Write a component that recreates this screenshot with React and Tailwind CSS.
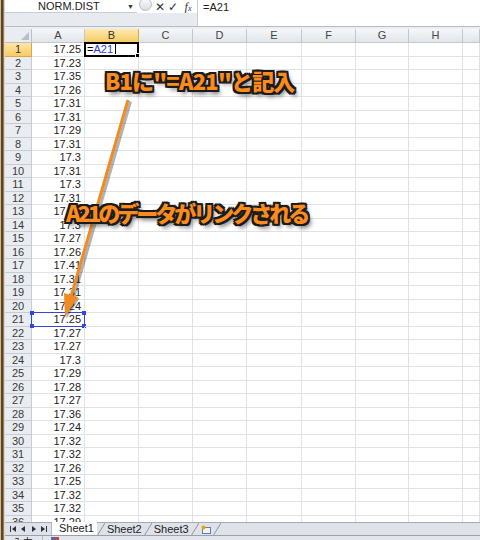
import React from "react";

// Column layout of the sheet
const cols = [
  { name: "A", cls: "w-[53px]" },
  { name: "B", cls: "w-[54px]" },
  { name: "C", cls: "w-[54px]" },
  { name: "D", cls: "w-[54px]" },
  { name: "E", cls: "w-[55px]" },
  { name: "F", cls: "w-[54px]" },
  { name: "G", cls: "w-[53px]" },
  { name: "H", cls: "w-[54px]" },
  { name: "", cls: "flex-1" },
];

const values = [
  "17.25", "17.23", "17.35", "17.26", "17.31", "17.31", "17.29", "17.31", "17.3",
  "17.31", "17.3", "17.31", "17.31", "17.3", "17.27", "17.26", "17.41", "17.31",
  "17.31", "17.24", "17.25", "17.27", "17.27", "17.3", "17.29", "17.28", "17.27",
  "17.36", "17.24", "17.32", "17.32", "17.26", "17.25", "17.32", "17.32", "17.29",
];

const outline =
  "[text-shadow:-2px_-2px_0_#1b1b1b,2px_-2px_0_#1b1b1b,-2px_2px_0_#1b1b1b,2px_2px_0_#1b1b1b,0_-2px_0_#1b1b1b,0_2px_0_#1b1b1b,-2px_0_0_#1b1b1b,2px_0_0_#1b1b1b,3px_4px_4px_rgba(0,0,0,0.55)]";

const Slash = () => (
  <svg width="8" height="13" className="shrink-0">
    <line x1="0" y1="13" x2="8" y2="0" stroke="#8d96a2" strokeWidth="1" />
  </svg>
);

const Row = ({ n, value }) => {
  const first = n === 1;
  return (
    <div className="flex h-[13.5px]">
      <div
        className={
          first
            ? "flex w-[27px] shrink-0 items-center justify-center border-r border-b border-[#d9a84a] bg-[linear-gradient(#fde7a6,#f6cb63)] text-[#333]"
            : "flex w-[27px] shrink-0 items-center justify-center border-r border-b border-[#c6ccd3] bg-[#e9ecf0] text-[#3a3a3a]"
        }
      >
        {n}
      </div>
      {cols.map((c, i) => (
        <div
          key={i}
          className={c.cls + " relative shrink-0 border-r border-b border-[#dfe2e6]"}
        >
          {i === 0 ? (
            <div className="flex h-full items-center justify-end pr-[3px] text-[#222]">
              {value}
            </div>
          ) : null}
          {i === 0 && n === 21 ? (
            <div className="absolute -top-px -left-px -right-px -bottom-px border border-[#3046e0]">
              <div className="absolute -top-[2px] -left-[2px] h-[4px] w-[4px] bg-[#3046e0]" />
              <div className="absolute -top-[2px] -right-[2px] h-[4px] w-[4px] bg-[#3046e0]" />
              <div className="absolute -bottom-[2px] -left-[2px] h-[4px] w-[4px] bg-[#3046e0]" />
              <div className="absolute -bottom-[2px] -right-[2px] h-[4px] w-[4px] bg-[#3046e0]" />
            </div>
          ) : null}
          {i === 1 && first ? (
            <div className="absolute -top-px -left-px -right-px -bottom-px flex items-center border-2 border-black bg-white pl-[1px]">
              <span className="text-black">=</span>
              <span className="text-[#2a3ae6]">A21</span>
              <span className="ml-[2px] h-[10px] w-px bg-black" />
              <div className="absolute -right-[3px] -bottom-[3px] h-[5px] w-[5px] border border-white bg-black" />
            </div>
          ) : null}
        </div>
      ))}
    </div>
  );
};

const App = () => {
  return (
    <div className="relative flex h-[540px] w-[480px] overflow-hidden bg-white font-['Liberation_Sans',sans-serif] text-[11px] text-[#222]">
      {/* Window frame */}
      <div className="flex h-full w-[5px] shrink-0">
        <div className="w-px bg-[#cbbb9e]" />
        <div className="w-[2px] bg-[#5e4222]" />
        <div className="w-px bg-[#9c7c54]" />
        <div className="w-px bg-[#d9d4cc]" />
      </div>

      <div className="flex min-w-0 flex-1 flex-col">
        {/* Formula bar */}
        <div className="flex h-[13px] shrink-0 items-center">
          <div className="flex h-full w-[132px] items-center border-b border-[#c8cdd4]">
            <span className="flex-1 pl-[33px] leading-none">NORM.DIST</span>
            <span className="w-[10px] text-[7px] leading-none text-[#333]">▼</span>
          </div>
          <div className="flex h-full w-[16px] items-start justify-center overflow-hidden">
            <div className="-mt-[2px] h-[13px] w-[13px] rounded-full border border-[#b6bcc5] bg-[linear-gradient(#fafbfc,#d9dde3)]" />
          </div>
          <span className="w-[13px] text-center text-[12px] leading-none text-[#333]">✕</span>
          <span className="w-[13px] text-center text-[12px] leading-none text-[#333]">✓</span>
          <span className="w-[18px] text-center font-['Liberation_Serif',serif] text-[12px] italic leading-none text-[#333]">
            f<span className="text-[8px]">x</span>
          </span>
          <div className="flex h-[26px] flex-1 self-start border-l border-[#c8cdd4] pt-[1px] pl-[5px]">
            <span className="text-[11px] leading-[12px]">=A21</span>
          </div>
        </div>
        <div className="flex h-[13px] shrink-0">
          <div className="w-[192px] bg-[#e7eaee]" />
        </div>
        <div className="h-[3px] shrink-0 border-t border-[#b5bcc6] bg-[#eceef1]" />

        {/* Sheet grid */}
        <div className="h-[493px] shrink-0 overflow-hidden">
          <div className="flex h-[14px]">
            <div className="relative w-[27px] shrink-0 border-r border-b border-[#b9c0c9] bg-[#e9ecf0]">
              <svg width="8" height="8" className="absolute right-[2px] bottom-[2px]">
                <polygon points="8,0 8,8 0,8" fill="#b7bec7" />
              </svg>
            </div>
            {cols.map((c, i) => (
              <div
                key={i}
                className={
                  c.name === "B"
                    ? c.cls + " flex shrink-0 items-center justify-center border-r border-b border-[#d9a84a] bg-[linear-gradient(#fde9ad,#f6cc66)] text-[#333]"
                    : c.cls + " flex shrink-0 items-center justify-center border-r border-b border-[#c2c8d0] bg-[linear-gradient(#f6f7f9,#e1e5ea)] text-[#444]"
                }
              >
                {c.name}
              </div>
            ))}
          </div>
          {values.map((v, i) => (
            <Row key={i} n={i + 1} value={v} />
          ))}
        </div>

        {/* Sheet tabs */}
        <div className="flex h-[13px] shrink-0 border-t border-[#a3abb6] bg-[#dfe3e9]">
          <div className="flex w-[47px] shrink-0 items-center justify-around border-r border-[#b3bac4] px-[2px]">
            <svg width="6" height="6">
              <rect x="0" y="0" width="1" height="6" fill="#2b3440" />
              <polygon points="6,0 6,6 2,3" fill="#2b3440" />
            </svg>
            <svg width="5" height="6">
              <polygon points="4,0 4,6 0,3" fill="#2b3440" />
            </svg>
            <svg width="5" height="6">
              <polygon points="1,0 1,6 5,3" fill="#2b3440" />
            </svg>
            <svg width="6" height="6">
              <polygon points="0,0 0,6 4,3" fill="#2b3440" />
              <rect x="5" y="0" width="1" height="6" fill="#2b3440" />
            </svg>
          </div>
          <div className="-mt-px flex h-[13px] items-center bg-white pl-[7px] pr-[3px]">Sheet1</div>
          <Slash />
          <div className="flex items-center px-[2px]">Sheet2</div>
          <Slash />
          <div className="flex items-center px-[2px]">Sheet3</div>
          <Slash />
          <div className="flex w-[14px] items-center justify-center">
            <svg width="10" height="9">
              <rect x="1.5" y="2.5" width="8" height="6" fill="#eef3fa" stroke="#5f7fa8" />
              <circle cx="2.5" cy="2.5" r="2" fill="#f2a000" />
            </svg>
          </div>
          <Slash />
          <div className="flex-1" />
        </div>

        {/* Status bar */}
        <div className="flex h-[5px] shrink-0 overflow-hidden border-t border-[#98a1ac] bg-[#e2e6ec]">
          <div className="w-[38px] border-r border-[#b3bac4] pl-[8px] font-['Noto_Sans_CJK_JP',sans-serif] text-[10px] leading-[12px]">
            入力
          </div>
          <div className="ml-[8px] mt-[1px] h-[6px] w-[8px] bg-[linear-gradient(90deg,#3b6fc4,#d04030)]" />
        </div>
      </div>

      {/* Annotations */}
      <div className="pointer-events-none absolute inset-0">
        <svg width="480" height="540" className="absolute inset-0">
          <line x1="129" y1="100" x2="71" y2="300" stroke="rgba(0,0,0,0.3)" strokeWidth="3" transform="translate(1.5,1.5)" />
          <line x1="128" y1="100" x2="70" y2="300" stroke="#f28a22" strokeWidth="3" />
          <polygon points="65,317 78,297 64,293" fill="rgba(0,0,0,0.3)" transform="translate(1.5,1.5)" />
          <polygon points="65,317 78,297 64,293" fill="#f28a22" />
        </svg>
        <div
          className={
            "absolute top-[69px] left-[105px] whitespace-nowrap font-['Noto_Sans_CJK_JP',sans-serif] text-[22px] font-black leading-none tracking-[-0.8px] text-[#fb8c1c] " +
            outline
          }
        >
          B1に"=A21"と記入
        </div>
        <div
          className={
            "absolute top-[201px] left-[66px] whitespace-nowrap font-['Noto_Sans_CJK_JP',sans-serif] text-[22px] font-black leading-none tracking-[-3px] text-[#fb8c1c] " +
            outline
          }
        >
          A21のデータがリンクされる
        </div>
      </div>
    </div>
  );
};

export default App;
